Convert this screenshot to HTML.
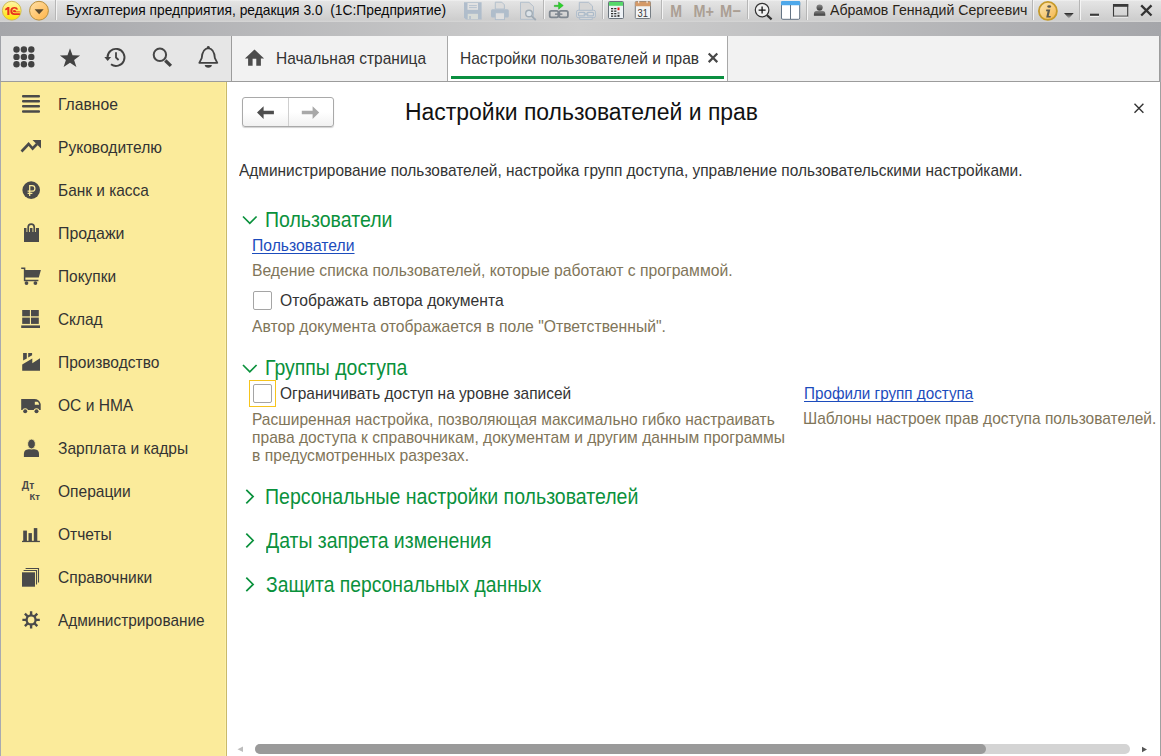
<!DOCTYPE html>
<html><head><meta charset="utf-8">
<style>
*{margin:0;padding:0;box-sizing:border-box}
html,body{width:1161px;height:756px;overflow:hidden;background:#fff;font-family:"Liberation Sans",sans-serif}
.a{position:absolute}
.t{position:absolute;white-space:nowrap;line-height:0;transform-origin:0 0}
#titlebar{left:0;top:0;width:1161px;height:22px;background:linear-gradient(#f2f2f2 0,#e4e4e4 1.5px,#cdcdcd 20px,#d6d6d6 22px)}
#band{left:0;top:22px;width:1161px;height:14px;background:linear-gradient(90deg,#a5a6aa 0%,#cfcfcf 50%,#a5a6aa 100%)}
#panel{left:0;top:36px;width:1161px;height:46px;background:#f2f2f2;border-bottom:1px solid #9c9c9c;border-left:1px solid #a0a2a8}
#icons{left:1px;top:36px;width:231px;height:45px;background:#e6e6e6;border-right:1px solid #9c9c9c}
#sidebar{left:0;top:82px;width:227px;height:674px;background:#fbeb9b;border-left:1px solid #a8aab0;border-right:1px solid #c9b96a}
#content{left:227px;top:82px;width:934px;height:674px;background:#fff;border-right:1px solid #a0a0a0}
</style></head><body>
<div id="titlebar" class="a"></div>
<div id="band" class="a"></div>
<div id="panel" class="a"></div>
<div id="icons" class="a"></div>
<div id="sidebar" class="a"></div>
<div id="content" class="a"></div>
<div class="a" style="left:225px;top:82px;width:1px;height:674px;background:#fdf1a8"></div>
<div class="a" style="left:1159px;top:36px;width:1px;height:46px;background:#9c9c9c"></div>
<div class="a" style="left:1160px;top:36px;width:1px;height:46px;background:#a9aaae"></div>

<!-- active tab -->
<div class="a" style="left:447px;top:36px;width:281px;height:45px;background:#fff;border-left:1px solid #a8a8a8;border-right:1px solid #a8a8a8"></div>
<div class="a" style="left:451px;top:76px;width:273px;height:3px;background:#0a8f40"></div>

<!-- nav buttons -->
<div class="a" style="left:242px;top:97px;width:92px;height:30px;border:1px solid #a9a9a9;border-radius:3px;background:linear-gradient(#fff 50%,#f1f1f1);box-shadow:0 1px 1px rgba(0,0,0,.18)"></div>
<div class="a" style="left:288px;top:98px;width:1px;height:28px;background:#cfcfcf"></div>

<!-- checkboxes -->
<div class="a" style="left:253px;top:291px;width:19px;height:19px;border:1px solid #a5a5a5;border-radius:2px;background:#fff"></div>
<div class="a" style="left:249px;top:380px;width:27px;height:27px;border:1px solid #f6c41c"></div>
<div class="a" style="left:253px;top:384px;width:19px;height:19px;border:1px solid #a5a5a5;border-radius:2px;background:#fff"></div>

<!-- scrollbar -->
<div class="a" style="left:255px;top:744px;width:875px;height:10px;border-radius:5px;background:#d4d4d4"></div>
<div class="a" style="left:255px;top:744px;width:731px;height:10px;border-radius:5px;background:#9a9a9a"></div>

<!--ICONS-->
<svg class="a" style="left:0;top:0" width="1161" height="756" viewBox="0 0 1161 756">
<g fill="#4a4a4a" stroke="none">
 <!-- sidebar icons -->
 <rect x="22" y="95" width="18" height="2.5" rx="1"/>
 <rect x="22" y="100" width="18" height="2.5" rx="1"/>
 <rect x="22" y="105" width="18" height="2.5" rx="1"/>
 <rect x="22" y="110.2" width="18" height="2.5" rx="1"/>
 <path d="M21.5 151.5 L28.6 144 L32.6 148.5 L37 144" fill="none" stroke="#4a4a4a" stroke-width="2.6"/>
 <path d="M32.5 140 L41 140 L41 148.5 Z"/>
 <circle cx="31.2" cy="190.1" r="8.8"/>
 <path d="M29.7 196 V185.6 H32.1 A2.8 2.8 0 0 1 32.1 191.2 H27.6 M27.6 193.4 H32.4" fill="none" stroke="#fbeb9b" stroke-width="1.25"/>
 <rect x="24" y="228" width="15" height="14"/>
 <path d="M28.2 232 V227.1 A3 3 0 0 1 34.2 227.1 V232" fill="none" stroke="#fbeb9b" stroke-width="3.4"/>
 <path d="M28.2 232 V227.1 A3 3 0 0 1 34.2 227.1 V232" fill="none" stroke="#4a4a4a" stroke-width="1.7"/>
 <path d="M21.2 268.3 H24.6 V280.5 H38.4" fill="none" stroke="#4a4a4a" stroke-width="1.5"/>
 <path d="M24.3 270 H40.9 L38.8 277.4 H24.3 Z"/>
 <circle cx="26.5" cy="283.1" r="1.9"/><circle cx="35.4" cy="283.1" r="1.9"/>
 <rect x="22.2" y="310" width="7.7" height="6.3"/><rect x="31" y="310" width="7.8" height="6.3"/>
 <rect x="22.2" y="317.6" width="7.7" height="6.3"/><rect x="31" y="317.6" width="7.8" height="6.3"/>
 <rect x="21.2" y="325.4" width="18.8" height="2.6"/>
 <path d="M23.1 353 H26.8 V358.4 L23.1 360.6 Z"/><path d="M28.2 353 H32.1 V355.3 L28.2 357.6 Z"/>
 <path d="M22.2 370.7 V364.4 L32.3 358.6 V363.2 L40 358.3 V370.7 Z"/>
 <path d="M21.2 399 H34.5 Q39 399 40.7 404 V410 H21.2 Z"/>
 <path d="M34.8 401.8 H37.5 Q38.8 402.5 39.2 404.8 H34.8 Z" fill="#fbeb9b"/>
 <circle cx="25.2" cy="411.2" r="2.9" fill="#fbeb9b"/><circle cx="36.5" cy="411.2" r="2.9" fill="#fbeb9b"/>
 <circle cx="25.2" cy="411.2" r="2"/><circle cx="36.5" cy="411.2" r="2"/>
 <path d="M23.9 457 V454 Q23.9 449.6 28.5 449.3 H34.5 Q39 449.6 39 454 V457 Z"/>
 <ellipse cx="31.5" cy="444" rx="3.9" ry="4.9" stroke="#fbeb9b" stroke-width="0.9"/>
 <text x="21.8" y="489.2" font-family="Liberation Sans" font-weight="bold" font-size="10.2" textLength="12.4" lengthAdjust="spacingAndGlyphs">Дт</text>
 <text x="29.6" y="500" font-family="Liberation Sans" font-weight="bold" font-size="9.8" textLength="10.3" lengthAdjust="spacingAndGlyphs">Кт</text>
 <rect x="23.2" y="530.6" width="3.7" height="10.5"/><rect x="28.5" y="533.1" width="3.4" height="8"/><rect x="33.8" y="528.1" width="3.5" height="13"/>
 <rect x="22" y="540.8" width="17.9" height="1.3"/>
 <path d="M25.6 568.5 H38.5 V582.6" fill="none" stroke="#4a4a4a" stroke-width="1.1"/>
 <path d="M23.6 570.5 H36.5 V584.6" fill="none" stroke="#4a4a4a" stroke-width="1.1"/>
 <rect x="22" y="572.3" width="13" height="14.4"/>
 <g transform="translate(31.1 619.9)">
  <circle r="4.5" fill="none" stroke="#4a4a4a" stroke-width="2.3"/>
  <g stroke="#4a4a4a" stroke-width="2.4"><path d="M0 -8.7 V-4.5 M0 8.7 V4.5 M-8.7 0 H-4.5 M8.7 0 H4.5 M-6.2 -6.2 L-3.2 -3.2 M6.2 -6.2 L3.2 -3.2 M-6.2 6.2 L-3.2 3.2 M6.2 6.2 L3.2 3.2"/></g>
 </g>
</g>
<!-- title bar icons -->
<defs>
 <linearGradient id="gy" x1="0" y1="0" x2="0" y2="1"><stop offset="0" stop-color="#fff7a8"/><stop offset="1" stop-color="#ffe100"/></linearGradient>
 <linearGradient id="go" x1="0" y1="0" x2="1" y2="1"><stop offset="0" stop-color="#ffe0a8"/><stop offset="1" stop-color="#ffb448"/></linearGradient>
 <linearGradient id="gi" x1="0" y1="0" x2="1" y2="1"><stop offset="0" stop-color="#fde8b8"/><stop offset="1" stop-color="#f3b448"/></linearGradient>
 <linearGradient id="gu" x1="0" y1="0" x2="0" y2="1"><stop offset="0" stop-color="#8a8a8a"/><stop offset="1" stop-color="#3a3a3a"/></linearGradient>
 <linearGradient id="gd" x1="0" y1="0" x2="0" y2="1"><stop offset="0" stop-color="#222"/><stop offset="1" stop-color="#bbb"/></linearGradient>
</defs>
<circle cx="11.75" cy="10.7" r="9.4" fill="url(#gy)" stroke="#cdb650" stroke-width="0.9"/>
<g fill="#e8321e">
 <path d="M5 9 L7.6 7 H9.4 V15 H7.3 V9.6 L5.6 10.6 Z"/>
 <path d="M19.9 15 H14.5 Q10.3 15 10.3 11 Q10.3 7 14.5 7 Q17.3 7 18.2 9.4 H16.1 Q15.5 8.6 14.5 8.6 Q12.3 8.6 12.3 11 Q12.3 13.2 14.5 13.2 H19.9 Z"/>
</g>
<path d="M12.9 11 Q12.9 10 14.5 10 Q15.6 10 16.2 11.4 H19.9 V12.2 H14.6 Q12.9 12.2 12.9 11 Z" fill="#e8321e"/>
<circle cx="39" cy="10.7" r="9.4" fill="url(#go)" stroke="#b98f3c" stroke-width="1"/>
<path d="M34.6 9.3 H43.7 L39.15 14.2 Z" fill="#5a4a30"/>
<rect x="55" y="0" width="1" height="20" fill="#b6b6b6"/><rect x="56" y="0" width="1" height="20" fill="#f4f4f4"/>
<g opacity="0.95">
 <!-- floppy -->
 <path d="M464 2.2 H481.6 V19.6 H466 L464 17.6 Z" fill="#aebccb"/>
 <rect x="467.5" y="3" width="10.5" height="6.8" fill="#e2e2e2"/>
 <rect x="469" y="5.2" width="7.8" height="0.9" fill="#aebccb"/><rect x="469" y="7.2" width="7.8" height="0.9" fill="#aebccb"/>
 <rect x="467.7" y="13.8" width="10.3" height="5.3" fill="#d8dcd8"/>
 <rect x="469.3" y="16" width="1.5" height="3" fill="#aebccb"/>
 <!-- printer -->
 <path d="M495.3 2.2 H501.8 L504.4 4.8 V9 H495.3 Z" fill="#dcdcdc" stroke="#aebccb" stroke-width="0.9"/>
 <rect x="491" y="9.2" width="17.8" height="8.2" rx="1.5" fill="#aebccb"/>
 <rect x="495.3" y="12.8" width="9.2" height="6.8" fill="#e0e0e0" stroke="#aebccb" stroke-width="0.9"/>
 <!-- preview -->
 <path d="M520.5 2.3 H529 L533.5 6.5 V19.3 H520.5 Z" fill="#d8d8d8" stroke="#aebccb" stroke-width="0.9"/>
 <circle cx="529" cy="13.5" r="3.3" fill="#dde4ea" stroke="#9eaab4" stroke-width="1.4"/>
 <path d="M531.3 15.8 L535.8 20" stroke="#9eaab4" stroke-width="1.8"/>
</g>
<rect x="543" y="0" width="1" height="19" fill="#b6b6b6"/><rect x="544" y="0" width="1" height="19" fill="#f4f4f4"/>
<path d="M554.3 5.3 H558.6 V2 L563.3 5.5 L558.6 9.2 V6.6 H554.3 Z" fill="#2ad62a" stroke="#22a022" stroke-width="0.5"/>
<g fill="none" stroke="#7f8790" stroke-width="1.8">
 <rect x="549.7" y="10.8" width="8.6" height="6.6" rx="1.6"/><rect x="559.3" y="10.8" width="8.6" height="6.6" rx="1.6"/>
</g>
<rect x="555" y="13.4" width="7.4" height="1.5" fill="#7f8790"/>
<g opacity="0.95">
 <path d="M579.3 2.3 H588.5 L592.5 6 V10.5 H579.3 Z" fill="#d6d6d6" stroke="#a9b9c9" stroke-width="0.9"/>
 <rect x="579.7" y="16.8" width="12.5" height="2.8" fill="#dadada" stroke="#a9b9c9" stroke-width="0.8"/>
 <rect x="576.6" y="10.3" width="18.8" height="7.3" rx="1.5" fill="#dcdcdc" stroke="#a9b9c9" stroke-width="0.9"/>
 <g fill="none" stroke="#a9b9c9" stroke-width="1.2">
  <rect x="578.5" y="12.3" width="6.5" height="3.6" rx="1"/><rect x="587" y="12.3" width="6.5" height="3.6" rx="1"/>
 </g>
 <rect x="583.5" y="13.5" width="5" height="1.2" fill="#a9b9c9"/>
</g>
<rect x="602" y="0" width="1" height="19" fill="#b6b6b6"/><rect x="603" y="0" width="1" height="19" fill="#f4f4f4"/>
<rect x="608.5" y="1.5" width="15" height="17" rx="1" fill="#eef2f6" stroke="#5c6670" stroke-width="0.9"/>
<rect x="609" y="2" width="14" height="3.8" fill="#56d86a"/>
<g fill="#2e2e2e">
 <rect x="611" y="8" width="2.2" height="1.3"/><rect x="614.2" y="8" width="2.2" height="1.3"/>
 <rect x="611" y="10.5" width="2.2" height="1.3"/><rect x="614.2" y="10.5" width="2.2" height="1.3"/>
 <rect x="611" y="13" width="2.2" height="1.3"/><rect x="614.2" y="13" width="2.2" height="1.3"/><rect x="617.5" y="12.5" width="2" height="1"/>
 <rect x="611" y="15.5" width="2.2" height="1.3"/><rect x="614.2" y="15.5" width="2.2" height="1.3"/><rect x="617.5" y="14.8" width="2" height="2"/>
</g>
<rect x="617.5" y="7.5" width="2" height="2.7" fill="#e81818"/>
<rect x="635.3" y="1.5" width="15.2" height="17" rx="1" fill="#f2f4f6" stroke="#6a7278" stroke-width="0.9"/>
<path d="M635.3 6.3 V2.5 Q635.3 1.5 636.3 1.5 H649.5 Q650.5 1.5 650.5 2.5 V6.3 Z" fill="#d49a68"/>
<rect x="638.3" y="1" width="0.9" height="2.2" fill="#fff"/><rect x="646.6" y="1" width="0.9" height="2.2" fill="#fff"/>
<text x="637.6" y="16.6" font-family="Liberation Sans" font-size="10.5" fill="#3a3a3a" textLength="10.4" lengthAdjust="spacingAndGlyphs">31</text>
<rect x="661" y="0" width="1" height="19" fill="#b6b6b6"/><rect x="662" y="0" width="1" height="19" fill="#f4f4f4"/>
<g fill="#ab9f94" font-family="Liberation Sans" font-weight="bold" font-size="17.3">
 <text x="670.2" y="16.9" textLength="11.8" lengthAdjust="spacingAndGlyphs">M</text>
 <text x="693.5" y="16.9" textLength="20.5" lengthAdjust="spacingAndGlyphs">M+</text>
 <text x="720" y="16.9" textLength="20.8" lengthAdjust="spacingAndGlyphs">M−</text>
</g>
<rect x="747" y="0" width="1" height="19" fill="#b6b6b6"/><rect x="748" y="0" width="1" height="19" fill="#f4f4f4"/>
<circle cx="762.1" cy="10.1" r="6.8" fill="#f0f0f0" stroke="#333" stroke-width="1.2"/>
<path d="M758.6 10.1 H765.6 M762.1 6.6 V13.6" stroke="#111" stroke-width="1.3"/>
<path d="M766.8 15 L771.6 19.4" stroke="#333" stroke-width="2.2"/>
<rect x="781.5" y="1.5" width="18.2" height="17.8" rx="1.3" fill="#fff" stroke="#647484" stroke-width="1"/>
<path d="M781 5.2 V2.5 Q781 1.1 782.4 1.1 H798.8 Q800.2 1.1 800.2 2.5 V5.2 Z" fill="#4ea8ea"/>
<rect x="790" y="5" width="1" height="14" fill="#647484"/>
<rect x="806" y="0" width="1" height="20" fill="#b6b6b6"/><rect x="807" y="0" width="1" height="20" fill="#f4f4f4"/>
<circle cx="819.6" cy="7.6" r="3.1" fill="url(#gu)"/>
<path d="M813.9 15.7 V13.9 Q813.9 10.7 817.5 10.7 H821.7 Q825.3 10.7 825.3 13.9 V15.7 Z" fill="url(#gu)"/>
<rect x="1032" y="0" width="1" height="20" fill="#b6b6b6"/><rect x="1033" y="0" width="1" height="20" fill="#f4f4f4"/>
<circle cx="1047.9" cy="10.9" r="9" fill="url(#gi)" stroke="#c69a2a" stroke-width="1.8"/>
<ellipse cx="1049.2" cy="6.5" rx="1.9" ry="1.3" fill="#5a5a52"/>
<path d="M1046.3 9.5 H1050.3 L1048.7 16 H1050.8 L1050.6 17.6 H1046.2 L1047.6 11.2 H1046 Z" fill="#5a5a52"/>
<path d="M1064 13 H1073.7 L1068.85 18.4 Z" fill="url(#gd)"/>
<rect x="1079" y="0" width="1" height="20" fill="#b6b6b6"/><rect x="1080" y="0" width="1" height="20" fill="#f4f4f4"/>
<rect x="1090" y="13.7" width="9" height="2.2" fill="#3a3a3a"/><rect x="1090" y="15.9" width="9" height="1" fill="#f6f6f6"/>
<rect x="1113.5" y="4.6" width="14.2" height="11.6" fill="none" stroke="#3a3a3a" stroke-width="1.1"/>
<rect x="1113" y="4" width="15.2" height="2.8" fill="#3a3a3a"/>
<rect x="1113.5" y="16.7" width="14.5" height="0.9" fill="#f6f6f6"/>
<path d="M1141.2 5.4 L1151.5 15.5 M1151.5 5.4 L1141.2 15.5" stroke="#333" stroke-width="2.3"/>
<!-- top panel icons -->
<g fill="#424242">
 <circle cx="16.5" cy="49.5" r="3.2"/><circle cx="23.9" cy="49.5" r="3.2"/><circle cx="31.3" cy="49.5" r="3.2"/>
 <circle cx="16.5" cy="56.9" r="3.2"/><circle cx="23.9" cy="56.9" r="3.2"/><circle cx="31.3" cy="56.9" r="3.2"/>
 <circle cx="16.5" cy="64.3" r="3.2"/><circle cx="23.9" cy="64.3" r="3.2"/><circle cx="31.3" cy="64.3" r="3.2"/>
 <path d="M70 48.3 L72.5 55.3 L80.1 55.4 L74.1 59.9 L76.4 67 L70 62.8 L63.6 67 L65.9 59.9 L59.9 55.4 L67.5 55.3 Z"/>
 <path d="M107.5 57.8 A8.5 8.5 0 1 1 111 64.3" fill="none" stroke="#424242" stroke-width="1.9"/>
 <path d="M104.3 57 H111.1 L107.7 61 Z"/>
 <path d="M116 52.3 V57.5 L118.6 60" fill="none" stroke="#424242" stroke-width="1.8"/>
 <circle cx="159.9" cy="54.8" r="6.2" fill="none" stroke="#474747" stroke-width="2"/>
 <path d="M165.3 60.5 L170.9 65.9" stroke="#424242" stroke-width="3.3"/>
 <path d="M199.3 62.8 L201.7 58.2 Q202.4 48.8 208.3 48.2 Q214.2 48.8 214.9 58.2 L217.3 62.8 Z" fill="none" stroke="#424242" stroke-width="1.8" stroke-linejoin="round"/>
 <circle cx="208.3" cy="47.3" r="1.4"/>
 <path d="M204.7 65 H211.9 Q211.5 67.8 208.3 67.8 Q205.1 67.8 204.7 65 Z"/>
 <path d="M254.5 49.6 L264.1 58.6 H260.9 V65.8 H256.3 V58.8 H252.6 V65.8 H248.1 V58.6 H244.9 Z" fill="#4d4d4d"/>
 <path d="M708.7 53.5 L717.3 62.1 M717.3 53.5 L708.7 62.1" stroke="#484848" stroke-width="2.2"/>
</g>
<!-- content icons -->
<g>
 <path d="M257 112.5 L263.6 106.2 V110.7 H273.9 V114.3 H263.6 V118.9 Z" fill="#4d4d4d"/>
 <path d="M319.2 112.5 L312.6 106.2 V110.7 H301.8 V114.3 H312.6 V118.9 Z" fill="#a8a8a8"/>
 <path d="M1134.5 103.8 L1143.4 112.7 M1143.4 103.8 L1134.5 112.7" stroke="#333" stroke-width="1.4"/>
 <g fill="none" stroke="#0a913c" stroke-width="1.7">
  <path d="M243 216.5 L249.8 223.3 L256.6 216.5"/>
  <path d="M243 365 L249.8 371.8 L256.6 365"/>
  <path d="M246.3 489.8 L253.1 496.6 L246.3 503.4"/>
  <path d="M246.3 533.7 L253.1 540.5 L246.3 547.3"/>
  <path d="M246.3 577.6 L253.1 584.4 L246.3 591.2"/>
 </g>
 <path d="M237.5 749.3 L243 746.6 V752 Z" fill="#bdbdbd"/>
 <path d="M1147 749.5 L1142 746.8 V752.2 Z" fill="#555"/>
</g>
</svg>
<!--/ICONS-->

<!--TEXTS-->
<div class="t" style="left:65.85px;top:10px;font-size:14.5px;color:#0a0a0a;transform:scaleX(0.9520);">Бухгалтерия предприятия, редакция 3.0  (1С:Предприятие)</div>
<div class="t" style="left:830.00px;top:10px;font-size:14.5px;color:#2a2418;transform:scaleX(0.9743);">Абрамов Геннадий Сергеевич</div>
<div class="t" style="left:275.59px;top:59px;font-size:17px;color:#333;transform:scaleX(0.9122);">Начальная страница</div>
<div class="t" style="left:459.79px;top:59px;font-size:17px;color:#333;transform:scaleX(0.9142);">Настройки пользователей и прав</div>
<div class="t" style="left:57.50px;top:105px;font-size:17px;color:#333;transform:scaleX(0.9234);">Главное</div>
<div class="t" style="left:57.50px;top:148px;font-size:17px;color:#333;transform:scaleX(0.9170);">Руководителю</div>
<div class="t" style="left:57.50px;top:191px;font-size:17px;color:#333;transform:scaleX(0.9080);">Банк и касса</div>
<div class="t" style="left:57.50px;top:234px;font-size:17px;color:#333;transform:scaleX(0.9362);">Продажи</div>
<div class="t" style="left:57.50px;top:277px;font-size:17px;color:#333;transform:scaleX(0.9081);">Покупки</div>
<div class="t" style="left:57.50px;top:320px;font-size:17px;color:#333;transform:scaleX(0.9061);">Склад</div>
<div class="t" style="left:57.50px;top:363px;font-size:17px;color:#333;transform:scaleX(0.9147);">Производство</div>
<div class="t" style="left:57.50px;top:406px;font-size:17px;color:#333;transform:scaleX(0.9147);">ОС и НМА</div>
<div class="t" style="left:57.50px;top:449px;font-size:17px;color:#333;transform:scaleX(0.9147);">Зарплата и кадры</div>
<div class="t" style="left:57.50px;top:492px;font-size:17px;color:#333;transform:scaleX(0.9147);">Операции</div>
<div class="t" style="left:57.50px;top:535px;font-size:17px;color:#333;transform:scaleX(0.9147);">Отчеты</div>
<div class="t" style="left:57.50px;top:578px;font-size:17px;color:#333;transform:scaleX(0.9147);">Справочники</div>
<div class="t" style="left:57.50px;top:621px;font-size:17px;color:#333;transform:scaleX(0.9043);">Администрирование</div>
<div class="t" style="left:404.74px;top:112px;font-size:24.7px;color:#111;transform:scaleX(0.9294);">Настройки пользователей и прав</div>
<div class="t" style="left:239.00px;top:171px;font-size:17px;color:#333;transform:scaleX(0.9092);">Администрирование пользователей, настройка групп доступа, управление пользовательскими настройками.</div>
<div class="t" style="left:265.40px;top:220px;font-size:21.8px;color:#0a913c;transform:scaleX(0.8957);">Пользователи</div>
<div class="t" style="left:251.80px;top:246px;font-size:17px;color:#1c4cbc;transform:scaleX(0.9239);text-decoration:underline;text-decoration-skip-ink:none;text-underline-offset:2px;">Пользователи</div>
<div class="t" style="left:251.80px;top:271px;font-size:17px;color:#7f7559;transform:scaleX(0.9239);">Ведение списка пользователей, которые работают с программой.</div>
<div class="t" style="left:279.60px;top:301px;font-size:17px;color:#333;transform:scaleX(0.9226);">Отображать автора документа</div>
<div class="t" style="left:251.80px;top:327px;font-size:17px;color:#7f7559;transform:scaleX(0.9246);">Автор документа отображается в поле &quot;Ответственный&quot;.</div>
<div class="t" style="left:265.31px;top:368px;font-size:21.8px;color:#0a913c;transform:scaleX(0.8925);">Группы доступа</div>
<div class="t" style="left:279.60px;top:394px;font-size:17px;color:#333;transform:scaleX(0.9103);">Ограничивать доступ на уровне записей</div>
<div class="t" style="left:251.80px;top:420px;font-size:17px;color:#7f7559;transform:scaleX(0.9137);">Расширенная настройка, позволяющая максимально гибко настраивать</div>
<div class="t" style="left:251.80px;top:438px;font-size:17px;color:#7f7559;transform:scaleX(0.9180);">права доступа к справочникам, документам и другим данным программы</div>
<div class="t" style="left:251.80px;top:456px;font-size:17px;color:#7f7559;transform:scaleX(0.9219);">в предусмотренных разрезах.</div>
<div class="t" style="left:803.60px;top:394px;font-size:17px;color:#1c4cbc;transform:scaleX(0.8963);text-decoration:underline;text-decoration-skip-ink:none;text-underline-offset:2px;">Профили групп доступа</div>
<div class="t" style="left:802.69px;top:419px;font-size:17px;color:#7f7559;transform:scaleX(0.9122);">Шаблоны настроек прав доступа пользователей.</div>
<div class="t" style="left:264.60px;top:497px;font-size:21.8px;color:#0a913c;transform:scaleX(0.8952);">Персональные настройки пользователей</div>
<div class="t" style="left:265.50px;top:541px;font-size:21.8px;color:#0a913c;transform:scaleX(0.8913);">Даты запрета изменения</div>
<div class="t" style="left:265.50px;top:585px;font-size:21.8px;color:#0a913c;transform:scaleX(0.8852);">Защита персональных данных</div>
<!--/TEXTS-->
</body></html>
